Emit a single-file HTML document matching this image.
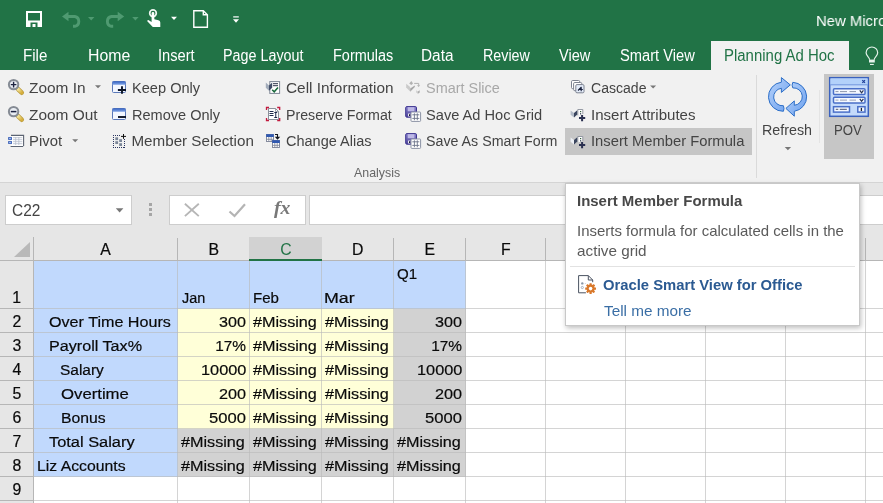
<!DOCTYPE html>
<html><head><meta charset="utf-8"><title>Excel</title>
<style>
html,body{margin:0;padding:0;}
body{width:883px;height:503px;overflow:hidden;position:relative;background:#fff;font-family:"Liberation Sans",sans-serif;}
.a{position:absolute;}
.t{position:absolute;white-space:nowrap;transform-origin:0 0;display:block;}
.k{color:#0a0a0a;-webkit-text-stroke:0.2px #0a0a0a;}
svg{position:absolute;overflow:visible;}
</style></head><body>
<!-- title + tabs -->
<div class="a" style="left:0;top:0;width:883px;height:70px;background:#217346"></div>
<div class="a" style="left:711px;top:41px;width:138px;height:30px;background:#f1f1f1"></div>
<!-- ribbon -->
<div class="a" style="left:0;top:70px;width:883px;height:112px;background:#f1f1f1"></div>
<div class="a" style="left:0;top:182px;width:883px;height:1px;background:#d4d4d4"></div>
<div class="a" style="left:565px;top:128px;width:187px;height:27px;background:#c6c6c6"></div>
<div class="a" style="left:824px;top:74px;width:50px;height:85px;background:#c6c6c6"></div>
<div class="a" style="left:756px;top:75px;width:1px;height:103px;background:#dadada"></div>
<div class="a" style="left:819px;top:90px;width:1px;height:53px;background:#e4e4e4"></div>
<!-- formula bar -->
<div class="a" style="left:0;top:183px;width:883px;height:78px;background:#e6e6e6"></div>
<div class="a" style="left:5px;top:195px;width:125px;height:28px;background:#fff;border:1px solid #cdcdcd"></div>
<div class="a" style="left:169px;top:195px;width:135px;height:28px;background:#fff;border:1px solid #cdcdcd"></div>
<div class="a" style="left:309px;top:195px;width:580px;height:28px;background:#fff;border:1px solid #cdcdcd"></div>
<!-- grid -->
<div class="a" id="grid" style="left:0;top:237px;width:883px;height:266px;">
<div class="a" style="left:0px;top:0px;width:883px;height:266px;background:#fff"></div>
<div class="a" style="left:0px;top:0px;width:883px;height:24px;background:#e6e6e6"></div>
<div class="a" style="left:0px;top:0px;width:34px;height:266px;background:#e6e6e6"></div>
<div class="a" style="left:249px;top:0px;width:73px;height:24px;background:#d2d2d2"></div>
<div class="a" style="left:249px;top:22px;width:73px;height:2px;background:#217346"></div>
<div class="a" style="left:34px;top:24px;width:144px;height:216px;background:#c1d9fd"></div>
<div class="a" style="left:178px;top:24px;width:288px;height:48px;background:#c1d9fd"></div>
<div class="a" style="left:178px;top:72px;width:216px;height:120px;background:#ffffd8"></div>
<div class="a" style="left:394px;top:72px;width:72px;height:120px;background:#d2d2d2"></div>
<div class="a" style="left:178px;top:192px;width:288px;height:48px;background:#d2d2d2"></div>
<div class="a" style="left:177px;top:24px;width:1px;height:242px;background:rgba(185,185,185,0.62)"></div>
<div class="a" style="left:249px;top:24px;width:1px;height:242px;background:rgba(185,185,185,0.62)"></div>
<div class="a" style="left:321px;top:24px;width:1px;height:242px;background:rgba(185,185,185,0.62)"></div>
<div class="a" style="left:393px;top:24px;width:1px;height:242px;background:rgba(185,185,185,0.62)"></div>
<div class="a" style="left:465px;top:24px;width:1px;height:242px;background:rgba(185,185,185,0.62)"></div>
<div class="a" style="left:545px;top:24px;width:1px;height:242px;background:rgba(185,185,185,0.62)"></div>
<div class="a" style="left:625px;top:24px;width:1px;height:242px;background:rgba(185,185,185,0.62)"></div>
<div class="a" style="left:705px;top:24px;width:1px;height:242px;background:rgba(185,185,185,0.62)"></div>
<div class="a" style="left:785px;top:24px;width:1px;height:242px;background:rgba(185,185,185,0.62)"></div>
<div class="a" style="left:865px;top:24px;width:1px;height:242px;background:rgba(185,185,185,0.62)"></div>
<div class="a" style="left:34px;top:71px;width:849px;height:1px;background:rgba(185,185,185,0.62)"></div>
<div class="a" style="left:34px;top:95px;width:849px;height:1px;background:rgba(185,185,185,0.62)"></div>
<div class="a" style="left:34px;top:119px;width:849px;height:1px;background:rgba(185,185,185,0.62)"></div>
<div class="a" style="left:34px;top:143px;width:849px;height:1px;background:rgba(185,185,185,0.62)"></div>
<div class="a" style="left:34px;top:167px;width:849px;height:1px;background:rgba(185,185,185,0.62)"></div>
<div class="a" style="left:34px;top:191px;width:849px;height:1px;background:rgba(185,185,185,0.62)"></div>
<div class="a" style="left:34px;top:215px;width:849px;height:1px;background:rgba(185,185,185,0.62)"></div>
<div class="a" style="left:34px;top:239px;width:849px;height:1px;background:rgba(185,185,185,0.62)"></div>
<div class="a" style="left:34px;top:263px;width:849px;height:1px;background:rgba(185,185,185,0.62)"></div>
<div class="a" style="left:177px;top:1px;width:1px;height:23px;background:#b6b6b6"></div>
<div class="a" style="left:393px;top:1px;width:1px;height:23px;background:#b6b6b6"></div>
<div class="a" style="left:465px;top:1px;width:1px;height:23px;background:#b6b6b6"></div>
<div class="a" style="left:545px;top:1px;width:1px;height:23px;background:#b6b6b6"></div>
<div class="a" style="left:625px;top:1px;width:1px;height:23px;background:#b6b6b6"></div>
<div class="a" style="left:705px;top:1px;width:1px;height:23px;background:#b6b6b6"></div>
<div class="a" style="left:785px;top:1px;width:1px;height:23px;background:#b6b6b6"></div>
<div class="a" style="left:865px;top:1px;width:1px;height:23px;background:#b6b6b6"></div>
<div class="a" style="left:33px;top:0px;width:1px;height:266px;background:#b6b6b6"></div>
<div class="a" style="left:0px;top:23px;width:249px;height:1px;background:#b6b6b6"></div>
<div class="a" style="left:322px;top:23px;width:561px;height:1px;background:#b6b6b6"></div>
<div class="a" style="left:0px;top:71px;width:33px;height:1px;background:#b6b6b6"></div>
<div class="a" style="left:0px;top:95px;width:33px;height:1px;background:#b6b6b6"></div>
<div class="a" style="left:0px;top:119px;width:33px;height:1px;background:#b6b6b6"></div>
<div class="a" style="left:0px;top:143px;width:33px;height:1px;background:#b6b6b6"></div>
<div class="a" style="left:0px;top:167px;width:33px;height:1px;background:#b6b6b6"></div>
<div class="a" style="left:0px;top:191px;width:33px;height:1px;background:#b6b6b6"></div>
<div class="a" style="left:0px;top:215px;width:33px;height:1px;background:#b6b6b6"></div>
<div class="a" style="left:0px;top:239px;width:33px;height:1px;background:#b6b6b6"></div>
<div class="a" style="left:0px;top:263px;width:33px;height:1px;background:#b6b6b6"></div>
<svg style="left:14px;top:5px" width="16" height="15" viewBox="0 0 16 15"><path d="M16 0V15H0Z" fill="#b9b9b9"/></svg>
</div>
<!-- tooltip -->
<div class="a" style="left:565px;top:183px;width:293px;height:141px;background:#fff;border:1px solid #c8c8c8;box-shadow:1px 2px 5px rgba(0,0,0,0.26)"></div>
<div class="a" style="left:570px;top:266px;width:285px;height:1px;background:#e2e2e2"></div>
<svg style="left:0;top:0" width="883" height="503" viewBox="0 0 883 503">
<defs>
<linearGradient id="gt" x1="0" y1="0" x2="0" y2="1"><stop offset="0" stop-color="#3563c4"/><stop offset="1" stop-color="#86a8e6"/></linearGradient>
<linearGradient id="gr" x1="0" y1="0" x2="1" y2="1"><stop offset="0" stop-color="#b9d4fb"/><stop offset="1" stop-color="#6a9fee"/></linearGradient>
<linearGradient id="gp" x1="0" y1="0" x2="0" y2="1"><stop offset="0" stop-color="#8d86cf"/><stop offset="1" stop-color="#4f4699"/></linearGradient>
<linearGradient id="gh" x1="0" y1="0" x2="1" y2="1"><stop offset="0" stop-color="#f3e49a"/><stop offset="1" stop-color="#d6ae3c"/></linearGradient>
</defs>
<!-- QAT: save -->
<g fill="#fff">
<path fill-rule="evenodd" d="M26 11H42V27H26Z M28 13V20.5H40V13Z M30.5 22.5V27H37.5V22.5Z M32.5 24H35.5V27H32.5Z"/>
</g>
<!-- undo -->
<g fill="none" stroke="#4f9a71" stroke-width="2.900" stroke-linejoin="miter">
<path d="M66.500 16.500H74.800A5 5 0 0 1 74.800 26.300H73"/>
<path d="M119.700 16.500H111.400A5 5 0 0 0 111.400 26.300H113.200"/>
</g>
<path d="M62 16.500L68.500 11.800V21.200Z" fill="#4f9a71"/>
<path d="M124.200 16.500L117.700 11.800V21.200Z" fill="#4f9a71"/>
<path d="M88 17H94.400L91.200 20.400Z" fill="#4f9a71"/>
<path d="M132.200 17H138.600L135.400 20.400Z" fill="#4f9a71"/>
<!-- touch -->
<g>
<circle cx="153" cy="13.200" r="3.300" fill="none" stroke="#eef6f1" stroke-width="1.700"/>
<path d="M151.600 13.300a1.350 1.350 0 0 1 2.700 0V19.300L158.400 20.200Q160.300 20.700 160.300 22.500V26.900H152.800L147.300 21.300Q146.800 20 148.300 19.900L151.600 22Z" fill="#fff"/>
</g>
<path d="M171 16.700H177L174 19.900Z" fill="#fff"/>
<!-- new doc -->
<path d="M193.800 10.700H203.300L207.400 14.800V27.200H193.800Z M203.300 10.700V14.800H207.400" fill="none" stroke="#fff" stroke-width="1.400"/>
<!-- customize -->
<rect x="233.200" y="16.300" width="5.600" height="1.200" fill="#fff"/>
<path d="M233 19.300H239L236 22.800Z" fill="#fff"/>
<!-- lightbulb -->
<g fill="none" stroke="#e4f2ea" stroke-width="1.200">
<path d="M869.600 59.800C869.600 57 866.100 56 866.100 52.800A5.800 5.800 0 0 1 877.700 52.800C877.700 56 874.200 57 874.200 59.800"/>
</g>
<rect x="869" y="59.600" width="5.800" height="2.900" fill="#e4f2ea"/>
<rect x="870" y="63.900" width="3.800" height="1.100" fill="#e4f2ea"/>

<!-- ribbon arrows -->
<g fill="#777">
<path d="M95 85.300H101L98 88.300Z"/>
<path d="M72.200 139.200H78.200L75.200 142.200Z"/>
<path d="M650.100 85.500H656.100L653.100 88.500Z"/>
<path d="M784.700 147H791.100L787.900 150.200Z"/>
</g>
<!-- name box arrow -->
<path d="M115.800 208.200H123.400L119.600 212.400Z" fill="#777"/>
<!-- dots -->
<g fill="#a6a6a6"><rect x="149" y="203" width="3" height="3"/><rect x="149" y="208" width="3" height="3"/><rect x="149" y="213" width="3" height="3"/></g>
<!-- X and check -->
<path d="M184.900 203.800L198.800 216.100M198.800 203.800L184.900 216.100" stroke="#b6b6b6" stroke-width="1.900" fill="none"/>
<path d="M229.500 211.500L234.500 216L245 204.300" stroke="#b4b4b4" stroke-width="2.200" fill="none"/>

<!-- zoom in / out -->
<g>
<path d="M18.300 89.300L21.700 92.700" stroke="#b8993a" stroke-width="4.600" stroke-linecap="round"/>
<path d="M18.300 89.300L21.700 92.700" stroke="url(#gh)" stroke-width="3.200" stroke-linecap="round"/>
<circle cx="13.600" cy="84.600" r="4.700" fill="#e9edf3" stroke="#858b94" stroke-width="2"/>
<path d="M10.800 84.600H16.400M13.600 81.800V87.400" stroke="#1c2340" stroke-width="1.400"/>
</g>
<g>
<path d="M18.300 116.300L21.700 119.700" stroke="#b8993a" stroke-width="4.600" stroke-linecap="round"/>
<path d="M18.300 116.300L21.700 119.700" stroke="url(#gh)" stroke-width="3.200" stroke-linecap="round"/>
<circle cx="13.600" cy="111.600" r="4.700" fill="#e9edf3" stroke="#858b94" stroke-width="2"/>
<path d="M10.800 111.600H16.400" stroke="#1c2340" stroke-width="1.500"/>
</g>
<!-- pivot -->
<g>
<rect x="11.500" y="135.800" width="12" height="10.500" fill="#fff"/>
<path d="M13 137.700H22.300M13 139.700H22.300M13 141.700H22.300M13 143.700H22.300M15.700 137V145M18.800 137V145" stroke="#b4bccb" stroke-width="0.800"/>
<path d="M11 135.400H23.600V146M10.600 146.500H23.200" fill="none" stroke="#5d6573" stroke-width="1.100"/>
<rect x="8.100" y="137.100" width="3.900" height="2.800" fill="#3f63b8"/>
<rect x="8.100" y="141.100" width="3.900" height="2.800" fill="#3f63b8"/>
<rect x="9" y="138.100" width="2.100" height="0.900" fill="#a4c0f2"/>
<rect x="9" y="142.100" width="2.100" height="0.900" fill="#a4c0f2"/>
</g>
<!-- keep only -->
<g>
<rect x="112.500" y="81.500" width="13" height="11" rx="1" fill="#f3f7ff" stroke="#5a78b8" stroke-width="1"/>
<rect x="112.500" y="81.500" width="13" height="3.300" fill="url(#gt)"/>
<path d="M117.900 90H126M122 86.200V93.800" stroke="#0c1426" stroke-width="1.900"/>
</g>
<!-- remove only -->
<g>
<rect x="112.500" y="108.500" width="13" height="11" rx="1" fill="#f3f7ff" stroke="#5a78b8" stroke-width="1"/>
<rect x="112.500" y="108.500" width="13" height="3.300" fill="url(#gt)"/>
<path d="M118 117H126" stroke="#0c1426" stroke-width="1.900"/>
</g>
<!-- member selection -->
<g>
<path d="M113 135.500H125M113 147.500H125M113.500 135V148M124.500 135V148" fill="none" stroke="#2a3560" stroke-width="1" stroke-dasharray="1 1"/>
<g fill="#7b8698"><rect x="115.300" y="137.300" width="2.800" height="2.800"/><rect x="115.300" y="141.200" width="2.800" height="2.800"/><rect x="119.200" y="139.200" width="2.800" height="2.800"/><rect x="119.200" y="143.200" width="2.800" height="2.800"/></g>
<rect x="120.500" y="133.500" width="6" height="5.500" fill="#f1f1f1"/>
<path d="M121 136.400H126M123.500 134V138.800" stroke="#111" stroke-width="1"/>
</g>
<!-- cell information -->
<g>
<rect x="269.800" y="81.600" width="9.800" height="11.800" fill="#fff" stroke="#7d8594" stroke-width="1"/>
<path d="M273 83.700H278M273 85.700H278" stroke="#2a3048" stroke-width="1"/>
<path d="M272.200 89.700L274.200 91.800L278 87.400" stroke="#17683a" stroke-width="1.500" fill="none"/>
<path d="M265.800 82.600L269 85.600V90.800L265.800 87.800Z" fill="#a2acba"/>
<path d="M272.200 82.600L269 85.600V90.800L272.200 87.800Z" fill="#414d68"/>
</g>
<!-- preserve format -->
<g>
<path d="M268.500 108.500H275.500L278.500 111.500V119.500H268.500Z" fill="#fff" stroke="#8b919b" stroke-width="1"/>
<path d="M275.500 108.500V111.500H278.500" fill="none" stroke="#8b919b" stroke-width="0.800"/>
<path d="M269.500 111.500H273.500M269.500 113.500H273.500M269.500 115.500H273.500" stroke="#1f2a4a" stroke-width="1"/>
<path d="M274.300 112.500H277.200M274.300 117.500H277.200M275.750 112.500V117.500" stroke="#1f2a4a" stroke-width="1"/>
<path d="M266.500 110V107.500H269M277.200 107.500H279.700V110M279.700 118V120.500H277.200M269 120.500H266.500V118" fill="none" stroke="#c21a3e" stroke-width="1.300"/>
</g>
<!-- change alias -->
<g>
<rect x="266.500" y="134.500" width="7" height="7" fill="#fff" stroke="#7a8094" stroke-width="0.900"/>
<rect x="266.200" y="134.200" width="7.600" height="2.800" fill="#2f58b0"/>
<path d="M266.500 139.300H273.500M268.800 137V141.500M271.200 137V141.500" stroke="#7a8094" stroke-width="0.800"/>
<rect x="272.500" y="140.500" width="7" height="7" fill="#fff" stroke="#7a8094" stroke-width="0.900"/>
<rect x="272.200" y="140.200" width="7.600" height="2.800" fill="#2f58b0"/>
<path d="M272.500 145.300H279.500M274.800 143V147.500M277.200 143V147.500" stroke="#7a8094" stroke-width="0.800"/>
<path d="M275 134.500H277.500V139" stroke="#10141e" stroke-width="1.100" fill="none"/>
<path d="M274.800 136.800H280.200L277.500 139.800Z" fill="#10141e"/>
</g>
<!-- smart slice (disabled) -->
<g>
<path d="M406.200 83.800L410.200 87V91.600L406.200 87.600Z" fill="#cacaca"/>
<path d="M410.200 88.600L414.800 85.600V87L410.200 91.800Z" fill="#a6a6a6"/>
<path d="M409.200 83.400L411.400 81L413 83.400L411.400 85Z" fill="#b2b2b2"/>
<path d="M414.200 83.400H418.700V85.600" stroke="#b0b0b0" stroke-width="1" fill="none"/>
<path d="M417 85.200H420.200L418.600 87Z" fill="#b0b0b0"/>
<path d="M416.200 90.200L417.900 91.400V93.800L416.200 92.600Z" fill="#cdcdcd"/>
<path d="M419.700 90.200L417.900 91.400V93.800L419.700 92.600Z" fill="#ababab"/>
</g>
<!-- save ad hoc grid / save as smart form -->
<g>
<rect x="405.700" y="106.600" width="10.800" height="10.600" rx="1.200" fill="url(#gp)" stroke="#3d3490" stroke-width="1"/>
<rect x="407.800" y="107.200" width="6.600" height="4" fill="#bdb8e6"/>
<rect x="408" y="113.600" width="2.400" height="2.800" fill="#fff"/>
<rect x="408.900" y="114.200" width="1.500" height="1.800" fill="#1c1a40"/>
<rect x="411" y="112" width="9.600" height="9.400" rx="0.800" fill="#fff" stroke="#8b92a4" stroke-width="1"/>
<path d="M412.300 114.800H419.300M412.300 118.400H419.300M414.400 113.300V120.200M417.300 113.300V120.200" stroke="#6d748a" stroke-width="0.900"/>
</g>
<g transform="translate(0 27)">
<rect x="405.700" y="106.600" width="10.800" height="10.600" rx="1.200" fill="url(#gp)" stroke="#3d3490" stroke-width="1"/>
<rect x="407.800" y="107.200" width="6.600" height="4" fill="#bdb8e6"/>
<rect x="408" y="113.600" width="2.400" height="2.800" fill="#fff"/>
<rect x="408.900" y="114.200" width="1.500" height="1.800" fill="#1c1a40"/>
<rect x="411" y="112" width="9.600" height="9.400" rx="0.800" fill="#fff" stroke="#8b92a4" stroke-width="1"/>
<path d="M412.300 114.800H419.300M412.300 118.400H419.300M414.400 113.300V120.200M417.300 113.300V120.200" stroke="#6d748a" stroke-width="0.900"/>
</g>
<!-- cascade -->
<g fill="#fff" stroke="#7c8290" stroke-width="1">
<rect x="571.500" y="80.500" width="8.200" height="8.200" rx="1.200"/>
<rect x="573.600" y="82.500" width="8.200" height="8.200" rx="1.200"/>
<rect x="575.800" y="84.600" width="8.200" height="8.200" rx="1.200" fill="#e4ecf9"/>
</g>
<path d="M578 90.500L581.500 87M579.500 89.500H582.800M581.200 87.800V91.200" stroke="#1d2540" stroke-width="1.200" fill="none"/>
<!-- insert attributes / insert member formula -->
<g>
<path d="M570.600 110.400L574 113V117.400L570.600 114.800Z" fill="#b4bcc8"/>
<path d="M577.300 110.200L574 113V117.400L577.300 114.600Z" fill="#3a455e"/>
<path d="M577.800 115.400V109.500H582.800V114" fill="#fff" stroke="#8a909b" stroke-width="0.900"/>
<rect x="580" y="111" width="1.200" height="1.200" fill="#2d5a3a"/><rect x="580" y="113.200" width="1.200" height="1.200" fill="#2d3a4a"/>
<path d="M579 118H585.200M582.100 115V121.200" stroke="#2a3050" stroke-width="2"/>
</g>
<g transform="translate(0 27)">
<path d="M570.600 110.400L574 113V117.400L570.600 114.800Z" fill="#eceff4"/>
<path d="M577.300 110.200L574 113V117.400L577.300 114.600Z" fill="#3a455e"/>
<path d="M577.800 115.400V109.500H582.800V114" fill="#fff" stroke="#8a909b" stroke-width="0.900"/>
<rect x="580" y="111" width="1.200" height="1.200" fill="#2d5a3a"/><rect x="580" y="113.200" width="1.200" height="1.200" fill="#2d3a4a"/>
<path d="M579 118H585.200M582.100 115V121.200" stroke="#2a3050" stroke-width="2"/>
</g>
<!-- refresh -->
<g fill="url(#gr)" stroke="#2d6fc8" stroke-width="1" stroke-linejoin="round">
<path d="M781.400 77.600L790.300 84.900L781.400 92.400V88.300A8.700 8.700 0 0 0 783.400 105.700Q784.600 108.500 783.400 111.300A14.600 14.600 0 0 1 781.400 82.200Z"/>
<path d="M794.300 116.200L785.900 108.400L794.300 100.900V105.300A8.700 8.700 0 0 0 792.800 87.900Q791.400 85.200 792.800 82.300A14.600 14.600 0 0 1 794.300 111.300Z"/>
</g>
<!-- POV -->
<g>
<rect x="829.700" y="77.700" width="38.600" height="38.600" fill="#c5dbfb" stroke="#3b62be" stroke-width="1.500"/>
<rect x="830.500" y="78.500" width="37" height="6" fill="#b3d1fa"/>
<path d="M830.500 84.800H867.500" stroke="#5c84d6" stroke-width="0.800"/>
<path d="M862.300 80.200L865 82.900M865 80.200L862.300 82.900" stroke="#1f3f9a" stroke-width="1.200"/>
<rect x="833.500" y="88.800" width="31.500" height="5.600" rx="1" fill="#f4f8ff" stroke="#4a6fc8" stroke-width="1.500"/>
<rect x="833.500" y="97.200" width="31.500" height="5.800" rx="1" fill="#f4f8ff" stroke="#4a6fc8" stroke-width="1.500"/>
<path d="M835.500 91.600H838.500M840 91.600H847M849.500 91.600H856" stroke="#8d97ad" stroke-width="1"/>
<path d="M835.500 100.100H838.500M840 100.100H847M849.500 100.100H856" stroke="#9aa3b8" stroke-width="1"/>
<path d="M859.800 90.300L861.600 92.800L863.400 90.300M859.800 98.800L861.600 101.300L863.400 98.800" stroke="#2a3350" stroke-width="1.200" fill="none"/>
<rect x="833.500" y="106.700" width="16" height="5.400" fill="#f4f8ff" stroke="#4a6fc8" stroke-width="1.500"/>
<path d="M835.800 109.400H838.300M839.800 109.400H846.800" stroke="#6d768c" stroke-width="1.200"/>
<rect x="857.800" y="106.700" width="7.200" height="5.400" fill="#f4f8ff" stroke="#4a6fc8" stroke-width="1.500"/>
<path d="M861.400 107.900V111" stroke="#1a2030" stroke-width="1.300"/>
</g>
<!-- tooltip icon -->
<g>
<path d="M585.900 292.800H578.600V275.600H588.300L592.700 280V282.200" fill="none" stroke="#4b5362" stroke-width="1"/>
<path d="M588.300 275.600V280H592.700" fill="none" stroke="#4b5362" stroke-width="1"/>
<circle cx="582.300" cy="283.400" r="1.200" fill="#8a97a8"/>
<circle cx="582.300" cy="287.500" r="1.100" fill="none" stroke="#8a97a8" stroke-width="0.700"/>
<circle cx="585.200" cy="283.400" r="0.400" fill="#8a97a8"/>
<g transform="translate(590.600 288.600)">
<g fill="#d9782a">
<circle r="4"/>
<rect x="-1.100" y="-5.400" width="2.200" height="10.800" rx="0.300"/>
<rect x="-1.100" y="-5.400" width="2.200" height="10.800" rx="0.300" transform="rotate(45)"/>
<rect x="-1.100" y="-5.400" width="2.200" height="10.800" rx="0.300" transform="rotate(90)"/>
<rect x="-1.100" y="-5.400" width="2.200" height="10.800" rx="0.300" transform="rotate(135)"/>
</g>
<circle r="1.800" fill="#fff"/>
</g>
</g>
</svg>

<div class="a" style="left:0;top:0;width:883px;height:503px;will-change:transform">
<span class="t" style='left:816.19px;top:10.80px;font-size:15.4px;line-height:19px;color:#fff;transform:scaleX(0.9654);'>New Microsoft Excel Worksheet.xlsx - Excel</span>
<span class="t" style='left:23.09px;top:45.80px;font-size:15.6px;line-height:20px;color:#fff;transform:scaleX(0.9677);'>File</span>
<span class="t" style='left:88.23px;top:45.50px;font-size:15.6px;line-height:20px;color:#fff;transform:scaleX(1.0170);'>Home</span>
<span class="t" style='left:158.01px;top:45.50px;font-size:15.6px;line-height:20px;color:#fff;transform:scaleX(0.9387);'>Insert</span>
<span class="t" style='left:223.35px;top:45.50px;font-size:15.6px;line-height:20px;color:#fff;transform:scaleX(0.9194);'>Page Layout</span>
<span class="t" style='left:332.64px;top:45.50px;font-size:15.6px;line-height:20px;color:#fff;transform:scaleX(0.9281);'>Formulas</span>
<span class="t" style='left:420.77px;top:45.50px;font-size:15.6px;line-height:20px;color:#fff;transform:scaleX(0.9858);'>Data</span>
<span class="t" style='left:482.65px;top:45.50px;font-size:15.6px;line-height:20px;color:#fff;transform:scaleX(0.9163);'>Review</span>
<span class="t" style='left:559.18px;top:45.50px;font-size:15.6px;line-height:20px;color:#fff;transform:scaleX(0.9348);'>View</span>
<span class="t" style='left:619.79px;top:45.50px;font-size:15.6px;line-height:20px;color:#fff;transform:scaleX(0.9410);'>Smart View</span>
<span class="t" style='left:723.70px;top:45.50px;font-size:15.6px;line-height:20px;color:#217346;transform:scaleX(0.9590);'>Planning Ad Hoc</span>
<span class="t" style='left:28.59px;top:77.60px;font-size:15.2px;line-height:19px;color:#444;transform:scaleX(1.0157);'>Zoom In</span>
<span class="t" style='left:28.59px;top:104.60px;font-size:15.2px;line-height:19px;color:#444;transform:scaleX(1.0164);'>Zoom Out</span>
<span class="t" style='left:28.78px;top:131.30px;font-size:15.2px;line-height:19px;color:#444;transform:scaleX(0.9792);'>Pivot</span>
<span class="t" style='left:131.50px;top:77.60px;font-size:15.2px;line-height:19px;color:#444;transform:scaleX(0.9609);'>Keep Only</span>
<span class="t" style='left:131.50px;top:104.60px;font-size:15.2px;line-height:19px;color:#444;transform:scaleX(0.9565);'>Remove Only</span>
<span class="t" style='left:131.45px;top:131.30px;font-size:15.2px;line-height:19px;color:#444;'>Member Selection</span>
<span class="t" style='left:285.54px;top:77.60px;font-size:15.2px;line-height:19px;color:#444;transform:scaleX(1.0119);'>Cell Information</span>
<span class="t" style='left:285.63px;top:104.60px;font-size:15.2px;line-height:19px;color:#444;transform:scaleX(0.9350);'>Preserve Format</span>
<span class="t" style='left:285.58px;top:131.30px;font-size:15.2px;line-height:19px;color:#444;transform:scaleX(0.9548);'>Change Alias</span>
<span class="t" style='left:426.09px;top:77.60px;font-size:15.2px;line-height:19px;color:#a8a8a8;transform:scaleX(0.9508);'>Smart Slice</span>
<span class="t" style='left:426.08px;top:104.60px;font-size:15.2px;line-height:19px;color:#444;transform:scaleX(0.9627);'>Save Ad Hoc Grid</span>
<span class="t" style='left:426.10px;top:131.30px;font-size:15.2px;line-height:19px;color:#444;transform:scaleX(0.9372);'>Save As Smart Form</span>
<span class="t" style='left:590.61px;top:77.60px;font-size:15.2px;line-height:19px;color:#444;transform:scaleX(0.9262);'>Cascade</span>
<span class="t" style='left:590.54px;top:104.60px;font-size:15.2px;line-height:19px;color:#444;transform:scaleX(0.9904);'>Insert Attributes</span>
<span class="t" style='left:590.56px;top:131.30px;font-size:15.2px;line-height:19px;color:#444;transform:scaleX(0.9717);'>Insert Member Formula</span>
<span class="t" style='left:762.42px;top:120.00px;font-size:15.2px;line-height:19px;color:#444;transform:scaleX(0.9412);'>Refresh</span>
<span class="t" style='left:834.41px;top:120.00px;font-size:15.2px;line-height:19px;color:#444;transform:scaleX(0.8683);'>POV</span>
<span class="t" style='left:354.00px;top:164.70px;font-size:12.6px;line-height:16px;color:#666;transform:scaleX(0.9828);'>Analysis</span>
<span class="t" style='left:11.76px;top:200.50px;font-size:15.6px;line-height:20px;color:#444;transform:scaleX(0.9917);'>C22</span>
<span class="t" style='left:273.50px;top:195.80px;font-size:19px;line-height:24px;color:#787878;font-weight:700;font-style:italic;font-family:"Liberation Serif", serif;transform:scaleX(1.0407);'>fx</span>
<span class="t k" style='left:100.29px;top:240.00px;font-size:15.8px;line-height:20px;'>A</span>
<span class="t k" style='left:208.50px;top:240.00px;font-size:15.8px;line-height:20px;'>B</span>
<span class="t" style='left:280.25px;top:240.00px;font-size:15.8px;line-height:20px;color:#217346;'>C</span>
<span class="t k" style='left:352.06px;top:240.00px;font-size:15.8px;line-height:20px;'>D</span>
<span class="t k" style='left:424.44px;top:240.00px;font-size:15.8px;line-height:20px;'>E</span>
<span class="t k" style='left:500.88px;top:240.00px;font-size:15.8px;line-height:20px;'>F</span>
<span class="t k" style='left:12.27px;top:288.10px;font-size:15.8px;line-height:20px;'>1</span>
<span class="t k" style='left:12.52px;top:312.30px;font-size:15.8px;line-height:20px;'>2</span>
<span class="t k" style='left:12.52px;top:336.30px;font-size:15.8px;line-height:20px;'>3</span>
<span class="t k" style='left:12.52px;top:360.30px;font-size:15.8px;line-height:20px;'>4</span>
<span class="t k" style='left:12.52px;top:384.30px;font-size:15.8px;line-height:20px;'>5</span>
<span class="t k" style='left:12.46px;top:408.30px;font-size:15.8px;line-height:20px;'>6</span>
<span class="t k" style='left:12.52px;top:432.30px;font-size:15.8px;line-height:20px;'>7</span>
<span class="t k" style='left:12.52px;top:456.30px;font-size:15.8px;line-height:20px;'>8</span>
<span class="t k" style='left:12.52px;top:480.30px;font-size:15.8px;line-height:20px;'>9</span>
<span class="t k" style='left:48.61px;top:311.90px;font-size:15.4px;line-height:19px;transform:scaleX(1.0479);'>Over Time Hours</span>
<span class="t k" style='left:48.59px;top:335.90px;font-size:15.4px;line-height:19px;transform:scaleX(1.0487);'>Payroll Tax%</span>
<span class="t k" style='left:60.35px;top:359.90px;font-size:15.4px;line-height:19px;transform:scaleX(1.0052);'>Salary</span>
<span class="t k" style='left:60.78px;top:383.90px;font-size:15.4px;line-height:19px;transform:scaleX(1.0869);'>Overtime</span>
<span class="t k" style='left:61.12px;top:407.90px;font-size:15.4px;line-height:19px;transform:scaleX(1.0221);'>Bonus</span>
<span class="t k" style='left:49.00px;top:431.90px;font-size:15.4px;line-height:19px;transform:scaleX(1.0650);'>Total Salary</span>
<span class="t k" style='left:36.92px;top:455.90px;font-size:15.4px;line-height:19px;transform:scaleX(1.0257);'>Liz Accounts</span>
<span class="t k" style='left:181.67px;top:287.80px;font-size:15.4px;line-height:19px;transform:scaleX(0.9354);'>Jan</span>
<span class="t k" style='left:252.68px;top:287.80px;font-size:15.4px;line-height:19px;transform:scaleX(0.9787);'>Feb</span>
<span class="t k" style='left:324.16px;top:287.80px;font-size:15.4px;line-height:19px;transform:scaleX(1.1560);'>Mar</span>
<span class="t k" style='left:396.97px;top:264.30px;font-size:15.4px;line-height:19px;transform:scaleX(0.9789);'>Q1</span>
<span class="t k" style='left:219.14px;top:311.90px;font-size:15.4px;line-height:19px;transform:scaleX(1.0490);'>300</span>
<span class="t k" style='left:435.14px;top:311.90px;font-size:15.4px;line-height:19px;transform:scaleX(1.0490);'>300</span>
<span class="t k" style='left:253.20px;top:311.90px;font-size:15.4px;line-height:19px;transform:scaleX(1.0510);'>#Missing</span>
<span class="t k" style='left:325.30px;top:311.90px;font-size:15.4px;line-height:19px;transform:scaleX(1.0510);'>#Missing</span>
<span class="t k" style='left:215.17px;top:335.90px;font-size:15.4px;line-height:19px;'>17%</span>
<span class="t k" style='left:431.17px;top:335.90px;font-size:15.4px;line-height:19px;'>17%</span>
<span class="t k" style='left:253.20px;top:335.90px;font-size:15.4px;line-height:19px;transform:scaleX(1.0510);'>#Missing</span>
<span class="t k" style='left:325.30px;top:335.90px;font-size:15.4px;line-height:19px;transform:scaleX(1.0510);'>#Missing</span>
<span class="t k" style='left:200.71px;top:359.90px;font-size:15.4px;line-height:19px;transform:scaleX(1.0602);'>10000</span>
<span class="t k" style='left:416.71px;top:359.90px;font-size:15.4px;line-height:19px;transform:scaleX(1.0602);'>10000</span>
<span class="t k" style='left:253.20px;top:359.90px;font-size:15.4px;line-height:19px;transform:scaleX(1.0510);'>#Missing</span>
<span class="t k" style='left:325.30px;top:359.90px;font-size:15.4px;line-height:19px;transform:scaleX(1.0510);'>#Missing</span>
<span class="t k" style='left:219.01px;top:383.90px;font-size:15.4px;line-height:19px;transform:scaleX(1.0544);'>200</span>
<span class="t k" style='left:435.01px;top:383.90px;font-size:15.4px;line-height:19px;transform:scaleX(1.0544);'>200</span>
<span class="t k" style='left:253.20px;top:383.90px;font-size:15.4px;line-height:19px;transform:scaleX(1.0510);'>#Missing</span>
<span class="t k" style='left:325.30px;top:383.90px;font-size:15.4px;line-height:19px;transform:scaleX(1.0510);'>#Missing</span>
<span class="t k" style='left:209.23px;top:407.90px;font-size:15.4px;line-height:19px;transform:scaleX(1.0788);'>5000</span>
<span class="t k" style='left:425.23px;top:407.90px;font-size:15.4px;line-height:19px;transform:scaleX(1.0788);'>5000</span>
<span class="t k" style='left:253.20px;top:407.90px;font-size:15.4px;line-height:19px;transform:scaleX(1.0510);'>#Missing</span>
<span class="t k" style='left:325.30px;top:407.90px;font-size:15.4px;line-height:19px;transform:scaleX(1.0510);'>#Missing</span>
<span class="t k" style='left:181.20px;top:431.90px;font-size:15.4px;line-height:19px;transform:scaleX(1.0510);'>#Missing</span>
<span class="t k" style='left:253.20px;top:431.90px;font-size:15.4px;line-height:19px;transform:scaleX(1.0510);'>#Missing</span>
<span class="t k" style='left:325.30px;top:431.90px;font-size:15.4px;line-height:19px;transform:scaleX(1.0510);'>#Missing</span>
<span class="t k" style='left:397.30px;top:431.90px;font-size:15.4px;line-height:19px;transform:scaleX(1.0510);'>#Missing</span>
<span class="t k" style='left:181.20px;top:455.90px;font-size:15.4px;line-height:19px;transform:scaleX(1.0510);'>#Missing</span>
<span class="t k" style='left:253.20px;top:455.90px;font-size:15.4px;line-height:19px;transform:scaleX(1.0510);'>#Missing</span>
<span class="t k" style='left:325.30px;top:455.90px;font-size:15.4px;line-height:19px;transform:scaleX(1.0510);'>#Missing</span>
<span class="t k" style='left:397.30px;top:455.90px;font-size:15.4px;line-height:19px;transform:scaleX(1.0510);'>#Missing</span>
<span class="t" style='left:576.88px;top:192.10px;font-size:14.6px;line-height:18px;color:#484848;font-weight:700;transform:scaleX(1.0243);'>Insert Member Formula</span>
<span class="t" style='left:576.61px;top:221.80px;font-size:14.8px;line-height:18px;color:#5a5a5a;transform:scaleX(1.0111);'>Inserts formula for calculated cells in the</span>
<span class="t" style='left:577.35px;top:241.50px;font-size:14.8px;line-height:18px;color:#5a5a5a;transform:scaleX(1.0323);'>active grid</span>
<span class="t" style='left:602.98px;top:276.10px;font-size:14.8px;line-height:18px;color:#2b5a92;font-weight:700;'>Oracle Smart View for Office</span>
<span class="t" style='left:603.91px;top:301.50px;font-size:14.8px;line-height:18px;color:#3a6ea5;transform:scaleX(1.0344);'>Tell me more</span>
</div>
</body></html>
